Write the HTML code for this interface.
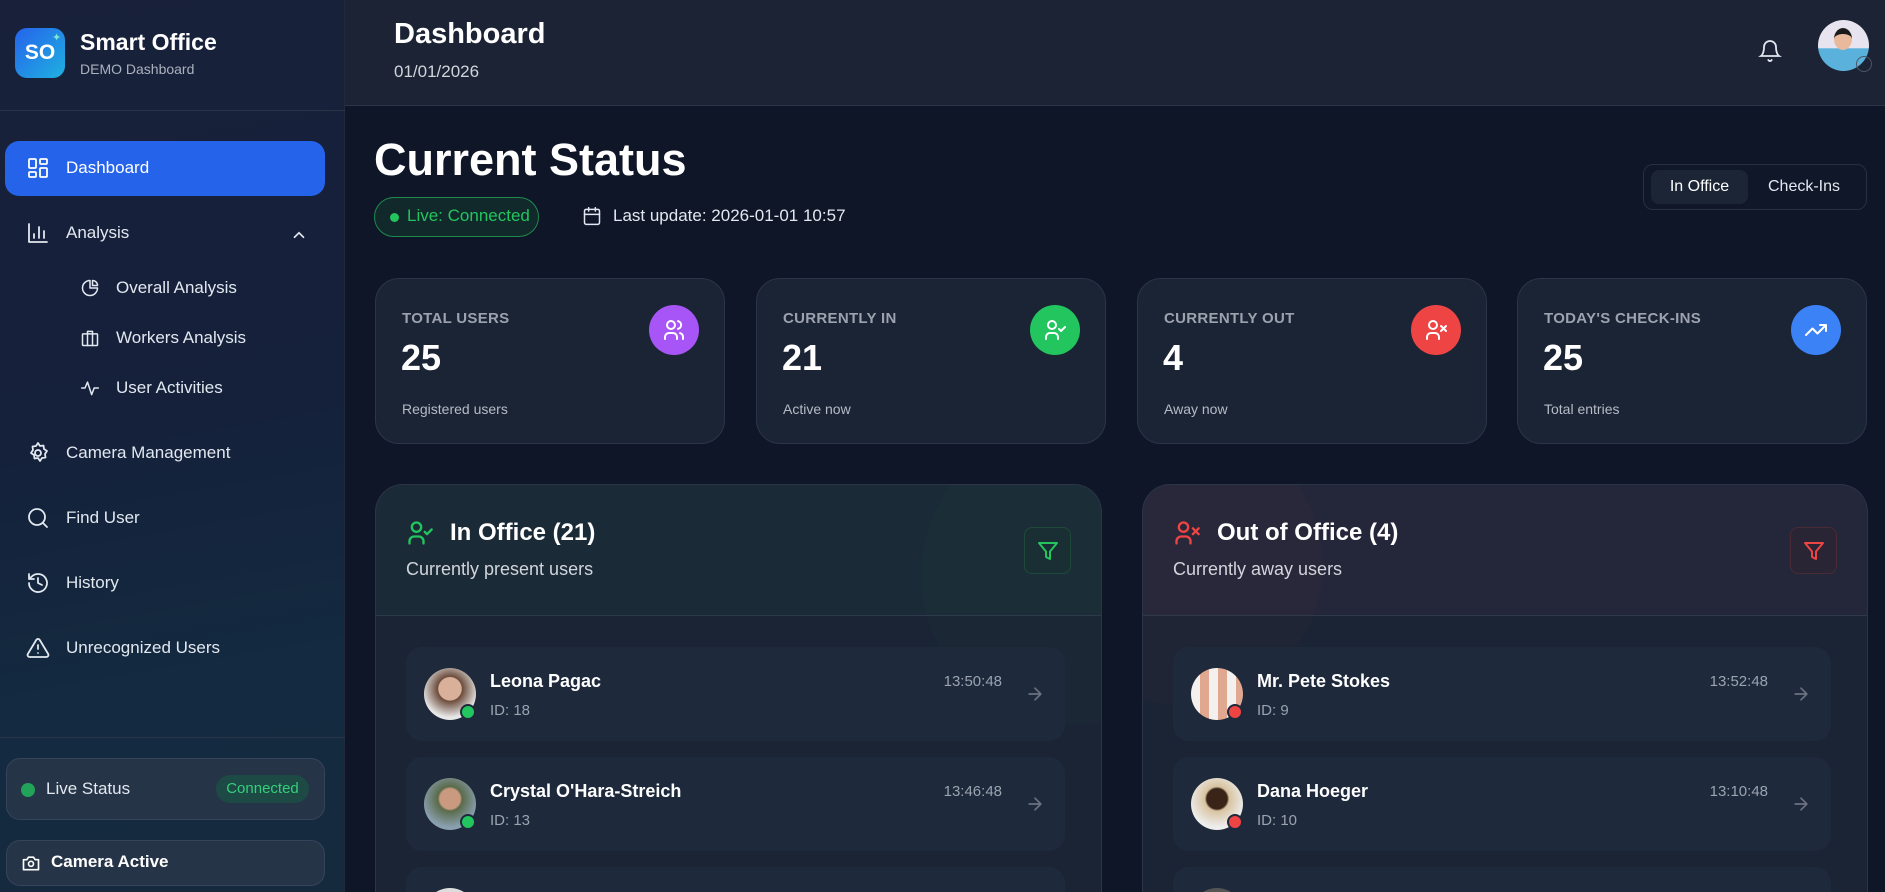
<!DOCTYPE html>
<html><head><meta charset="utf-8">
<style>
*{box-sizing:border-box;margin:0;padding:0}
html,body{width:1885px;height:892px;overflow:hidden}
body{background:#0e1628;font-family:"Liberation Sans",sans-serif;color:#fff;position:relative}
.abs{position:absolute}
.side{left:0;top:0;width:345px;height:892px;background:linear-gradient(170deg,#19213a 0%,#15203a 45%,#132a40 75%,#162a3e 100%);border-right:1px solid #1f2a3d}
.nav{position:absolute;left:26px;display:flex;align-items:center;font-size:17px;color:#e2e8f0}
.nav svg{width:24px;height:24px;margin-right:16px;stroke:#e2e8f0;fill:none;stroke-width:1.8;stroke-linecap:round;stroke-linejoin:round}
.sub{left:80px;font-size:17px}
.sub svg{width:20px;height:20px;margin-right:16px}
.hdr{left:345px;top:0;width:1540px;height:106px;background:#1b2335;border-bottom:1px solid #2a3448}
.card{position:absolute;top:278px;width:350px;height:166px;background:#1b2435;border:1px solid #2b3547;border-radius:24px}
.card .l{position:absolute;left:26px;top:31px;font-size:15px;font-weight:bold;color:#9ca3af;letter-spacing:.3px}
.card .n{position:absolute;left:25px;top:58px;font-size:36px;font-weight:bold}
.card .s{position:absolute;left:26px;top:122px;font-size:14px;color:#b6bcc6}
.card .i{position:absolute;right:25px;top:26px;width:50px;height:50px;border-radius:50%;display:flex;align-items:center;justify-content:center}
.card .i svg{width:24px;height:24px;fill:none;stroke:#fff;stroke-width:2;stroke-linecap:round;stroke-linejoin:round}
.panel{position:absolute;top:484px;height:420px;border:1px solid #2b3547;border-radius:28px;background:#1b2435;overflow:hidden}
.ph{position:absolute;left:0;top:0;right:0;height:131px;border-bottom:1px solid #2e3a4c}
.pt{position:absolute;left:30px;top:34px;font-size:24px;font-weight:bold;display:flex;align-items:center}
.pt svg{width:28px;height:28px;margin-right:16px;fill:none;stroke-width:2;stroke-linecap:round;stroke-linejoin:round}
.ps{position:absolute;left:30px;top:74px;font-size:18px;color:#d1d5db}
.fb{position:absolute;top:42px;right:30px;width:47px;height:47px;border-radius:8px;display:flex;align-items:center;justify-content:center}
.fb svg{width:24px;height:24px;fill:none;stroke-width:2;stroke-linejoin:round}
.item{position:absolute;left:30px;right:36px;height:94px;background:#1e293b;border-radius:16px}
.av{position:absolute;left:18px;top:21px;width:52px;height:52px;border-radius:50%}
.dot{position:absolute;left:54px;top:57px;width:16px;height:16px;border-radius:50%;border:2px solid #1e293b}
.nm{position:absolute;left:84px;top:24px;font-size:18px;font-weight:bold}
.id{position:absolute;left:84px;top:55px;font-size:15px;color:#9ca3af}
.tm{position:absolute;right:63px;top:26px;font-size:15px;color:#9ca3af}
.ar{position:absolute;right:20px;top:37px;width:20px;height:20px;fill:none;stroke:#6b7280;stroke-width:2;stroke-linecap:round;stroke-linejoin:round}
</style></head><body>
<div class="abs side">
  <div class="abs" style="left:15px;top:28px;width:50px;height:50px;border-radius:12px;background:linear-gradient(135deg,#2563eb,#1fb1e0);display:flex;align-items:center;justify-content:center;font-weight:bold;font-size:21px">SO</div>
  <div class="abs" style="left:52px;top:31px;color:#7ee8d0;font-size:11px">✦</div>
  <div class="abs" style="left:80px;top:29px;font-size:23px;font-weight:bold">Smart Office</div>
  <div class="abs" style="left:80px;top:61px;font-size:14px;color:#aab2bf">DEMO Dashboard</div>
  <div class="abs" style="left:0;top:110px;width:345px;height:1px;background:#2a3448"></div>
  <div class="abs" style="left:5px;top:141px;width:320px;height:55px;border-radius:14px;background:#2563eb"></div>
  <div class="nav" style="top:156px;color:#fff"><svg viewBox="0 0 24 24" style="stroke:#fff"><rect x="3" y="3" width="7" height="9" rx="1"/><rect x="14" y="3" width="7" height="5" rx="1"/><rect x="14" y="12" width="7" height="9" rx="1"/><rect x="3" y="16" width="7" height="5" rx="1"/></svg>Dashboard</div>
  <div class="nav" style="top:221px"><svg viewBox="0 0 24 24"><path d="M3 3v18h18M8 17v-4M13 17V6M18 17v-7"/></svg>Analysis</div>
  <svg class="abs" style="left:290px;top:226px;width:18px;height:18px" viewBox="0 0 24 24" fill="none" stroke="#e2e8f0" stroke-width="2.2" stroke-linecap="round"><path d="M6 15l6-6 6 6"/></svg>
  <div class="nav sub" style="top:278px"><svg viewBox="0 0 24 24"><path d="M21 12a9 9 0 1 1-9-9v9z"/><path d="M15 3a6 6 0 0 1 6 6h-6z"/></svg>Overall Analysis</div>
  <div class="nav sub" style="top:328px"><svg viewBox="0 0 24 24"><rect x="3" y="7" width="18" height="14" rx="1"/><path d="M9 7V4h6v3M9 7v14M15 7v14"/></svg>Workers Analysis</div>
  <div class="nav sub" style="top:378px"><svg viewBox="0 0 24 24"><path d="M2 12h4l3-7 5 15 3-8h5"/></svg>User Activities</div>
  <div class="nav" style="top:441px"><svg viewBox="0 0 24 24"><circle cx="12" cy="12" r="3"/><path d="M12 2l2 3 3.5-.5.5 3.5 3 2-2 3 .5 3.5-3.5.5-2 3-2-3-3.5.5-.5-3.5-3-2 2-3-.5-3.5 3.5-.5z"/></svg>Camera Management</div>
  <div class="nav" style="top:506px"><svg viewBox="0 0 24 24"><circle cx="11" cy="11" r="8"/><path d="M21 21l-4.3-4.3"/></svg>Find User</div>
  <div class="nav" style="top:571px"><svg viewBox="0 0 24 24"><path d="M3 12a9 9 0 1 0 3-6.7L3 8M3 3v5h5M12 7v5l4 2"/></svg>History</div>
  <div class="nav" style="top:636px"><svg viewBox="0 0 24 24"><path d="M10.3 3.9L1.8 18a2 2 0 0 0 1.7 3h17a2 2 0 0 0 1.7-3L13.7 3.9a2 2 0 0 0-3.4 0zM12 9v4M12 17h.01"/></svg>Unrecognized Users</div>
  <div class="abs" style="left:0;top:737px;width:345px;height:1px;background:#2a3448"></div>
  <div class="abs" style="left:6px;top:758px;width:319px;height:62px;border-radius:14px;background:#263447;border:1px solid #35445a"></div>
  <div class="abs" style="left:21px;top:783px;width:14px;height:14px;border-radius:50%;background:#22a35a"></div>
  <div class="abs" style="left:46px;top:779px;font-size:17px;color:#e2e8f0">Live Status</div>
  <div class="abs" style="left:216px;top:775px;width:93px;height:28px;border-radius:14px;background:#1d4a45;color:#34d07a;font-size:15px;text-align:center;line-height:28px">Connected</div>
  <div class="abs" style="left:6px;top:840px;width:319px;height:46px;border-radius:14px;background:#263447;border:1px solid #35445a"></div>
  <svg class="abs" style="left:21px;top:853px;width:20px;height:20px" viewBox="0 0 24 24" fill="none" stroke="#fff" stroke-width="2" stroke-linejoin="round"><path d="M3 8h4l2-3h6l2 3h4v12H3z"/><circle cx="12" cy="13" r="3"/></svg>
  <div class="abs" style="left:51px;top:852px;font-size:17px;font-weight:bold">Camera Active</div>
</div>
<div class="abs hdr">
  <div class="abs" style="left:49px;top:18px;font-size:29px;font-weight:bold">Dashboard</div>
  <div class="abs" style="left:49px;top:62px;font-size:17px;color:#d1d5db">01/01/2026</div>
  <svg class="abs" style="left:1413px;top:38px;width:24px;height:26px" viewBox="0 0 24 24" fill="none" stroke="#e2e8f0" stroke-width="1.8" stroke-linecap="round"><path d="M6 8a6 6 0 0 1 12 0c0 7 3 9 3 9H3s3-2 3-9M10.3 21a1.9 1.9 0 0 0 3.4 0"/></svg>
  <div class="abs" style="left:1473px;top:20px;width:51px;height:51px;border-radius:50%;background:linear-gradient(180deg,#e8e4ef 0%,#e8e4ef 55%,#5ab2dc 56%);overflow:hidden"><div style="position:absolute;left:16px;top:8px;width:18px;height:22px;border-radius:50%;background:#e9b99b;border-top:6px solid #1a1a1a"></div></div>
  <div class="abs" style="left:1511px;top:56px;width:16px;height:16px;border-radius:50%;border:1.5px solid #4b5563"></div>
</div>
<div class="abs" style="left:374px;top:134px;font-size:45px;font-weight:bold">Current Status</div>
<div class="abs" style="left:374px;top:197px;width:165px;height:40px;border:1.5px solid #1e8a4c;border-radius:20px;background:#12292c"></div>
<div class="abs" style="left:390px;top:213px;width:9px;height:9px;border-radius:50%;background:#22c55e"></div>
<div class="abs" style="left:407px;top:206px;font-size:17px;color:#22c55e">Live: Connected</div>
<svg class="abs" style="left:582px;top:206px;width:20px;height:20px" viewBox="0 0 24 24" fill="none" stroke="#e2e8f0" stroke-width="1.8" stroke-linecap="round"><rect x="3" y="4" width="18" height="18" rx="2"/><path d="M16 2v4M8 2v4M3 10h18"/></svg>
<div class="abs" style="left:613px;top:206px;font-size:17px;color:#e2e8f0">Last update: 2026-01-01 10:57</div>
<div class="abs" style="left:1643px;top:164px;width:224px;height:46px;border:1px solid #26303f;border-radius:10px;background:#0f1729"></div>
<div class="abs" style="left:1651px;top:170px;width:97px;height:34px;border-radius:8px;background:#1c2535;font-size:16px;text-align:center;line-height:34px">In Office</div>
<div class="abs" style="left:1768px;top:170px;font-size:16px;line-height:34px;color:#e2e8f0">Check-Ins</div>

<div class="card" style="left:375px"><div class="l">TOTAL USERS</div><div class="n">25</div><div class="s">Registered users</div><div class="i" style="background:#a855f7"><svg viewBox="0 0 24 24"><circle cx="9" cy="7" r="4"/><path d="M3 21v-2a4 4 0 0 1 4-4h4a4 4 0 0 1 4 4v2M16 3.1a4 4 0 0 1 0 7.8M21 21v-2a4 4 0 0 0-3-3.9"/></svg></div></div>
<div class="card" style="left:756px"><div class="l">CURRENTLY IN</div><div class="n">21</div><div class="s">Active now</div><div class="i" style="background:#22c55e"><svg viewBox="0 0 24 24"><circle cx="9" cy="7" r="4"/><path d="M3 21v-2a4 4 0 0 1 4-4h4a4 4 0 0 1 4 4v2M16 11l2 2 4-4"/></svg></div></div>
<div class="card" style="left:1137px"><div class="l">CURRENTLY OUT</div><div class="n">4</div><div class="s">Away now</div><div class="i" style="background:#ef4444"><svg viewBox="0 0 24 24"><circle cx="9" cy="7" r="4"/><path d="M3 21v-2a4 4 0 0 1 4-4h4a4 4 0 0 1 4 4v2M17 8l5 5M22 8l-5 5"/></svg></div></div>
<div class="card" style="left:1517px"><div class="l">TODAY'S CHECK-INS</div><div class="n">25</div><div class="s">Total entries</div><div class="i" style="background:#3b82f6"><svg viewBox="0 0 24 24"><path d="M22 7l-8.5 8.5-5-5L2 17M16 7h6v6"/></svg></div></div>

<div class="panel" style="left:375px;width:727px;height:408px;border-bottom:none;border-radius:28px 28px 0 0;background:linear-gradient(180deg,#1b2a37 0,#1b2a37 131px,#1b2435 131px)">
  <div class="abs" style="right:-120px;top:-60px;width:300px;height:300px;border-radius:50%;background:rgba(34,197,94,0.02)"></div>
  <div class="ph">
    <div class="pt"><svg viewBox="0 0 24 24" stroke="#22c55e"><circle cx="9" cy="7" r="4"/><path d="M3 21v-2a4 4 0 0 1 4-4h4a4 4 0 0 1 4 4v2M16 11l2 2 4-4"/></svg>In Office (21)</div>
    <div class="ps">Currently present users</div>
    <div class="fb" style="border:1px solid #1f4a3a;background:#1a2f33"><svg viewBox="0 0 24 24" stroke="#22c55e"><path d="M3 4h18l-7 8.5V20l-4-2v-5.5z"/></svg></div>
  </div>
  <div class="item" style="top:162px"><div class="av" style="background:radial-gradient(circle at 50% 40%,#d9b09a 0 28%,#6b4b3a 30%,#e8e8e8 70%)"></div><div class="dot" style="background:#22c55e"></div><div class="nm">Leona Pagac</div><div class="id">ID: 18</div><div class="tm">13:50:48</div><svg class="ar" viewBox="0 0 24 24"><path d="M5 12h14M12 5l7 7-7 7"/></svg></div>
  <div class="item" style="top:272px"><div class="av" style="background:radial-gradient(circle at 50% 40%,#c99a80 0 25%,#5a6b4a 30%,#8aa0b0 70%)"></div><div class="dot" style="background:#22c55e"></div><div class="nm">Crystal O'Hara-Streich</div><div class="id">ID: 13</div><div class="tm">13:46:48</div><svg class="ar" viewBox="0 0 24 24"><path d="M5 12h14M12 5l7 7-7 7"/></svg></div>
  <div class="item" style="top:382px"><div class="av" style="background:#ddd"></div></div>
</div>
<div class="panel" style="left:1142px;width:726px;height:408px;border-bottom:none;border-radius:28px 28px 0 0;background:linear-gradient(180deg,#24263a 0,#24263a 131px,#1b2435 131px)">
  <div class="abs" style="left:-100px;top:-60px;width:280px;height:280px;border-radius:50%;background:rgba(239,68,68,0.025)"></div>
  <div class="ph">
    <div class="pt"><svg viewBox="0 0 24 24" stroke="#ef4444"><circle cx="9" cy="7" r="4"/><path d="M3 21v-2a4 4 0 0 1 4-4h4a4 4 0 0 1 4 4v2M17 8l5 5M22 8l-5 5"/></svg>Out of Office (4)</div>
    <div class="ps">Currently away users</div>
    <div class="fb" style="border:1px solid #4a2a35;background:#2a2535"><svg viewBox="0 0 24 24" stroke="#ef4444"><path d="M3 4h18l-7 8.5V20l-4-2v-5.5z"/></svg></div>
  </div>
  <div class="item" style="top:162px"><div class="av" style="background:repeating-linear-gradient(90deg,#f3f0ee 0 9px,#e0a890 9px 18px)"></div><div class="dot" style="background:#ef4444"></div><div class="nm">Mr. Pete Stokes</div><div class="id">ID: 9</div><div class="tm">13:52:48</div><svg class="ar" viewBox="0 0 24 24"><path d="M5 12h14M12 5l7 7-7 7"/></svg></div>
  <div class="item" style="top:272px"><div class="av" style="background:radial-gradient(circle at 50% 40%,#3a2418 0 25%,#d8c3a0 30%,#eee 70%)"></div><div class="dot" style="background:#ef4444"></div><div class="nm">Dana Hoeger</div><div class="id">ID: 10</div><div class="tm">13:10:48</div><svg class="ar" viewBox="0 0 24 24"><path d="M5 12h14M12 5l7 7-7 7"/></svg></div>
  <div class="item" style="top:382px"><div class="av" style="background:#555"></div></div>
</div>
</body></html>
